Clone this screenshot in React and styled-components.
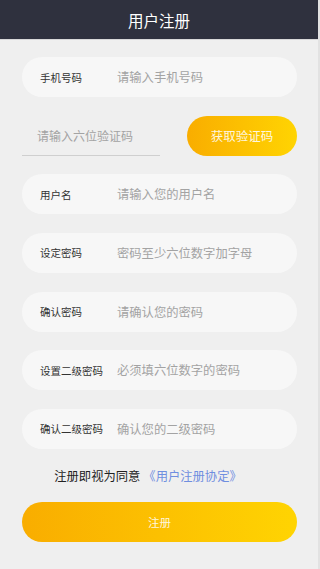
import React from 'react';
import styled, { createGlobalStyle } from 'styled-components';

const GlobalStyle = createGlobalStyle`
  html, body {
    margin: 0;
    padding: 0;
    background: #efefef;
  }
  * { box-sizing: border-box; }
`;

const Page = styled.div`
  width: 320px;
  min-height: 569px;
  background: #efefef;
  border-right: 2px solid #e2e2e2;
  font-family: "Noto Sans CJK SC", "Noto Sans", sans-serif;
  display: flex;
  flex-direction: column;
`;

const Header = styled.div`
  height: 40px;
  background: #2f313e;
  color: #fff;
  font-size: 15.5px;
  display: flex;
  align-items: center;
  justify-content: center;
  border-bottom: 1px solid #d8d8d8;
`;

const Form = styled.div`
  display: flex;
  flex-direction: column;
  gap: 18.67px;
  padding: 17px 21px 0 22px;
`;

const Row = styled.div`
  height: 40px;
  border-radius: 20px;
  background: #f7f7f7;
  display: flex;
  align-items: center;
  padding-left: 18px;
`;

const Label = styled.span`
  width: 77px;
  flex-shrink: 0;
  font-size: 10.5px;
  color: #333;
  white-space: nowrap;
`;

const Input = styled.input`
  flex: 1;
  min-width: 0;
  border: none;
  background: transparent;
  outline: none;
  font-family: inherit;
  font-size: ${p => p.$size || 12.3}px;
  color: #333;
  padding: 0;
  &::placeholder { color: #a3a3a3; }
`;

const CodeRow = styled.div`
  height: 40px;
  display: flex;
  align-items: center;
  justify-content: space-between;
`;

const CodeField = styled.div`
  width: 138px;
  height: 41px;
  border-bottom: 1px solid #cfcfcf;
  display: flex;
  align-items: center;
  padding-left: 15px;
`;

const GradientButton = styled.button`
  height: 40px;
  border: none;
  border-radius: 20px;
  background: linear-gradient(90deg, #f9ad00, #ffd402);
  color: rgba(255, 255, 255, 0.88);
  font-family: inherit;
  font-size: ${p => p.$size || 12.5}px;
  width: ${p => p.$width || '100%'};
  padding: 0;
`;

const Agreement = styled.div`
  height: 26px;
  margin-top: 14px;
  display: flex;
  align-items: center;
  justify-content: center;
  font-size: 12.3px;
  color: #222;
  padding-right: 22px;
`;

const Link = styled.span`
  color: #6f8ee0;
  margin-left: 3px;
`;

const Submit = styled.div`
  margin-top: 13px;
  padding: 0 21px 0 22px;
`;

const fields = [
  { label: '用户名', placeholder: '请输入您的用户名' },
  { label: '设定密码', placeholder: '密码至少六位数字加字母' },
  { label: '确认密码', placeholder: '请确认您的密码' },
  { label: '设置二级密码', placeholder: '必须填六位数字的密码' },
  { label: '确认二级密码', placeholder: '确认您的二级密码' },
];

export default function App() {
  return (
    <Page>
      <GlobalStyle />
      <Header>用户注册</Header>
      <Form>
        <Row>
          <Label>手机号码</Label>
          <Input placeholder="请输入手机号码" />
        </Row>
        <CodeRow>
          <CodeField>
            <Input $size={12} placeholder="请输入六位验证码" />
          </CodeField>
          <GradientButton $width="110px">获取验证码</GradientButton>
        </CodeRow>
        {fields.map(f => (
          <Row key={f.label}>
            <Label>{f.label}</Label>
            <Input placeholder={f.placeholder} />
          </Row>
        ))}
      </Form>
      <Agreement>
        注册即视为同意<Link>《用户注册协定》</Link>
      </Agreement>
      <Submit>
        <GradientButton $size={11.5}>注册</GradientButton>
      </Submit>
    </Page>
  );
}
